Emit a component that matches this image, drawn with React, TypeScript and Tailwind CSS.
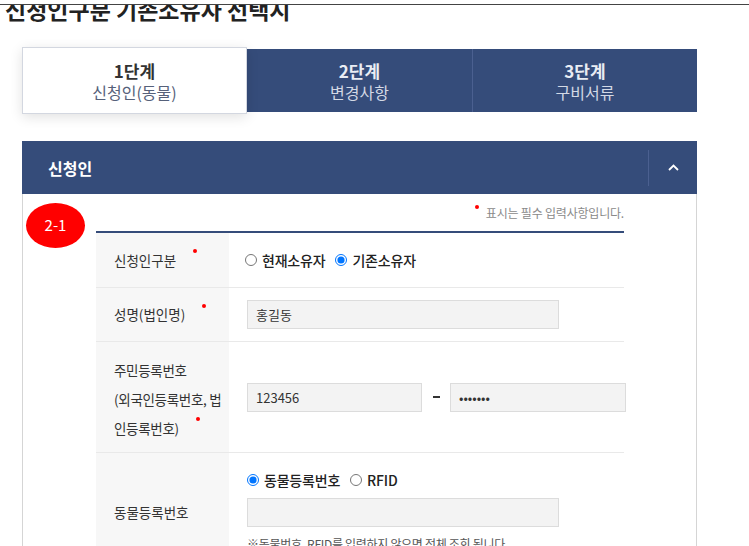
import React from 'react';

const NAVY = 'bg-[#354c7a]';

const Req = () => (
    <span className="inline-block relative -top-[11px] ml-[17px] w-[4px] h-[4px] rounded-full bg-[#ff0000] align-middle" />
);

const Radio = ({ name, label, checked }: { name: string; label: string; checked?: boolean }) => (
    <label className="flex items-center gap-[5px] text-[14px] font-medium text-[#222] tracking-[-0.2px]">
        <input type="radio" name={name} defaultChecked={checked} className="m-0 w-[12px] h-[12px]" />
        {label}
    </label>
);

const Field = ({ value, w, type = 'text' }: { value: string; w: string; type?: string }) => (
    <input
        type={type}
        defaultValue={value}
        readOnly
        className={`${w} shrink-0 h-[29px] bg-[#f3f3f3] border border-[#dcdcdc] px-[8px] text-[13px] text-[#333] outline-none`}
    />
);

export default function App() {
    return (
        <div className="w-[749px] h-[546px] overflow-hidden bg-white" style={{ fontFamily: '"Noto Sans CJK KR", "Noto Sans", sans-serif' }}>
            {/* fixed top bar, page is scrolled under it */}
            <div className="relative z-10 h-[5px] bg-white pt-[4px]">
                <div className="h-px bg-[#444]" />
            </div>

            <h2 className="-mt-[11px] pl-[5px] text-[23px] leading-[30px] font-bold text-[#222]">신청인구분 기존소유자 선택시</h2>

            {/* steps */}
            <div className={`mt-[25px] ml-[22px] w-[675px] h-[63px] flex ${NAVY}`}>
                <div className="w-[225px] -my-[2px] bg-white border border-[#d3d7e0] shadow-[0_3px_12px_rgba(0,0,0,0.12)] flex flex-col items-center justify-center">
                    <div className="text-[17px] leading-[23px] font-bold text-[#333]">1단계</div>
                    <div className="text-[16px] leading-[21px] text-[#56617a]">신청인(동물)</div>
                </div>
                <div className="w-[225px] flex flex-col items-center justify-center">
                    <div className="text-[17px] leading-[23px] font-bold text-[#e9edf4]">2단계</div>
                    <div className="text-[16px] leading-[21px] text-[#d3d9e5]">변경사항</div>
                </div>
                <div className="w-[225px] border-l border-[#4b6090] flex flex-col items-center justify-center">
                    <div className="text-[17px] leading-[23px] font-bold text-[#e9edf4]">3단계</div>
                    <div className="text-[16px] leading-[21px] text-[#d3d9e5]">구비서류</div>
                </div>
            </div>

            {/* section */}
            <div className="mt-[29px] ml-[22px] w-[675px]">
                <div className={`h-[53px] flex items-center justify-between ${NAVY}`}>
                    <span className="pl-[26px] text-[16px] font-bold text-white">신청인</span>
                    <button className="w-[49px] h-[36px] border-l border-[#4b6090] flex items-center justify-center">
                        <svg width="11" height="7" viewBox="0 0 11 7" fill="none">
                            <polyline points="1,6 5.5,1.5 10,6" stroke="white" strokeWidth="1.8" />
                        </svg>
                    </button>
                </div>

                <div className="relative border-x border-[#d5d5d5] pl-[73px] pr-[72px]">
                    <div className="absolute left-[3px] top-[9px] w-[59px] h-[45px] rounded-[50%] bg-[#ff0000] flex items-center justify-center text-[15px] text-white">2-1</div>

                    <div className="h-[37px] flex items-center justify-end">
                        <span className="inline-block relative -top-[6px] mr-[7px] w-[4px] h-[4px] rounded-full bg-[#ff0000]" />
                        <span className="text-[12px] text-[#8a8a8a] tracking-[-0.2px]">표시는 필수 입력사항입니다.</span>
                    </div>

                    <div className="border-t-2 border-[#354c7a]">
                        <div className="flex h-[55px] border-b border-[#e9e9e9]">
                            <div className="w-[133px] shrink-0 bg-[#f7f7f7] pl-[18px] flex items-center text-[13.5px] text-[#333]">
                                <span>신청인구분<Req /></span>
                            </div>
                            <div className="flex-1 pl-[16px] flex items-center gap-[10px]">
                                <Radio name="applicant" label="현재소유자" />
                                <Radio name="applicant" label="기존소유자" checked />
                            </div>
                        </div>

                        <div className="flex h-[54px] border-b border-[#e9e9e9]">
                            <div className="w-[133px] shrink-0 bg-[#f7f7f7] pl-[18px] flex items-center text-[13.5px] text-[#333]">
                                <span>성명(법인명)<Req /></span>
                            </div>
                            <div className="flex-1 pl-[18px] flex items-center">
                                <Field value="홍길동" w="w-[312px]" />
                            </div>
                        </div>

                        <div className="flex h-[111px] border-b border-[#e9e9e9]">
                            <div className="w-[133px] shrink-0 bg-[#f7f7f7] pl-[18px] flex items-center text-[13.5px] leading-[29px] text-[#333] tracking-[-0.3px]">
                                <span className="pt-[4px]">주민등록번호<br />(외국인등록번호, 법<br />인등록번호)<Req /></span>
                            </div>
                            <div className="flex-1 pl-[18px] flex items-center">
                                <Field value="123456" w="w-[175px]" />
                                <span className="w-[28px] shrink-0 flex justify-center">
                                    <span className="w-[7px] h-[2px] bg-[#333]" />
                                </span>
                                <Field value="1234567" type="password" w="w-[176px]" />
                            </div>
                        </div>

                        <div className="flex h-[118px]">
                            <div className="w-[133px] shrink-0 bg-[#f7f7f7] pl-[18px] flex items-center text-[13.5px] text-[#333]">
                                동물등록번호
                            </div>
                            <div className="flex-1 pl-[18px] pt-[19px]">
                                <div className="h-[16px] flex items-center gap-[10px]">
                                    <Radio name="animal" label="동물등록번호" checked />
                                    <Radio name="animal" label="RFID" />
                                </div>
                                <div className="mt-[10px]">
                                    <Field value="" w="w-[312px]" />
                                </div>
                                <p className="mt-[8px] text-[12px] text-[#555] tracking-[-0.3px]">※동물번호, RFID를 입력하지 않으면 전체 조회 됩니다.</p>
                            </div>
                        </div>
                    </div>
                </div>
            </div>
        </div>
    );
}
